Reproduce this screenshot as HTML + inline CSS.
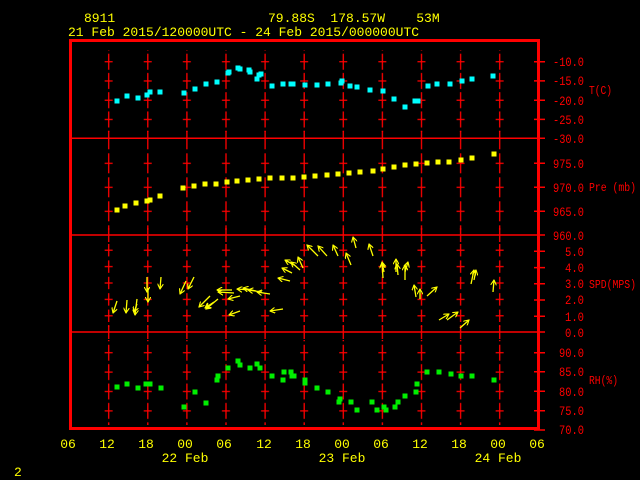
<!DOCTYPE html>
<html><head><meta charset="utf-8"><style>
html,body{margin:0;padding:0;background:#000;width:640px;height:480px;overflow:hidden}
svg{display:block}
text{font-family:"Liberation Mono",monospace}
</style></head><body>
<svg width="640" height="480" viewBox="0 0 640 480" xmlns="http://www.w3.org/2000/svg">
<defs>
<marker id="ah" viewBox="0 0 8 8" refX="7" refY="4" markerWidth="6" markerHeight="6" markerUnits="userSpaceOnUse" orient="auto">
<path d="M0,0 L7,4 L0,8" fill="none" stroke="#ffff00" stroke-width="1.5"/>
</marker>
<pattern id="pT" patternUnits="userSpaceOnUse" x="89.15" y="52.1" width="39.1" height="19.25">
<path d="M15.5 9.6H23.5M19.55 1.6V17.6" stroke="#f00" stroke-width="1.3"/></pattern>
<pattern id="pP" patternUnits="userSpaceOnUse" x="89.15" y="151.3" width="39.1" height="24">
<path d="M15.5 12H23.5M19.55 2V22" stroke="#f00" stroke-width="1.3"/></pattern>
<pattern id="pS" patternUnits="userSpaceOnUse" x="89.15" y="242" width="39.1" height="16.4">
<path d="M15.5 8.2H23.5M19.55 2V14.4" stroke="#f00" stroke-width="1.3"/></pattern>
<pattern id="pR" patternUnits="userSpaceOnUse" x="89.15" y="343" width="39.1" height="19.4">
<path d="M15.5 9.7H23.5M19.55 1.7V17.7" stroke="#f00" stroke-width="1.3"/></pattern>
<pattern id="pD" patternUnits="userSpaceOnUse" x="89.15" y="0" width="39.1" height="480">
<path d="M19.55 131V145M19.55 228V242M19.55 325V339" stroke="#f00" stroke-width="1.3"/></pattern>
</defs>
<g fill="#ffff00" font-size="13">
<text x="84" y="22">8911</text>
<text x="268" y="22" xml:space="preserve">79.88S  178.57W    53M</text>
<text x="68" y="36">21 Feb 2015/120000UTC - 24 Feb 2015/000000UTC</text>
<text x="14" y="476">2</text>
<g text-anchor="middle">
<text x="68" y="448">06</text><text x="107" y="448">12</text><text x="146" y="448">18</text><text x="185" y="448">00</text>
<text x="224" y="448">06</text><text x="264" y="448">12</text><text x="303" y="448">18</text><text x="342" y="448">00</text>
<text x="381" y="448">06</text><text x="420" y="448">12</text><text x="459" y="448">18</text><text x="498" y="448">00</text>
<text x="537" y="448">06</text>
<text x="185" y="462">22 Feb</text><text x="342" y="462">23 Feb</text><text x="498" y="462">24 Feb</text>
</g></g>
<rect x="104" y="50" width="402" height="82" fill="url(#pT)"/>
<rect x="104" y="145" width="402" height="85" fill="url(#pP)"/>
<rect x="104" y="240" width="402" height="87" fill="url(#pS)"/>
<rect x="104" y="340" width="402" height="85" fill="url(#pR)"/>
<rect x="104" y="0" width="402" height="480" fill="url(#pD)"/>
<g stroke="#f00" stroke-width="1.5">
<path d="M71 138.3H545M71 235H545M71 332H545"/>
<path d="M534 61.7H545M534 80.9H545M534 100.2H545M534 119.4H545M534 163.3H545M534 187.3H545M534 211.3H545M534 251.2H545M534 267.6H545M534 283.8H545M534 300H545M534 316.2H545M534 352.7H545M534 371.7H545M534 391.3H545M534 410.7H545M534 430H545"/>
</g>
<rect x="70.5" y="40.5" width="468" height="388" fill="none" stroke="#f00" stroke-width="3"/>
<g fill="#f00" font-size="13" text-anchor="end" lengthAdjust="spacingAndGlyphs">
<text x="584" y="66" textLength="31" lengthAdjust="spacingAndGlyphs">-10.0</text><text x="584" y="85" textLength="31" lengthAdjust="spacingAndGlyphs">-15.0</text><text x="584" y="105" textLength="31" lengthAdjust="spacingAndGlyphs">-20.0</text><text x="584" y="124" textLength="31" lengthAdjust="spacingAndGlyphs">-25.0</text><text x="584" y="143" textLength="31" lengthAdjust="spacingAndGlyphs">-30.0</text>
<text x="584" y="168" textLength="31" lengthAdjust="spacingAndGlyphs">975.0</text><text x="584" y="192" textLength="31" lengthAdjust="spacingAndGlyphs">970.0</text><text x="584" y="216" textLength="31" lengthAdjust="spacingAndGlyphs">965.0</text><text x="584" y="240" textLength="31" lengthAdjust="spacingAndGlyphs">960.0</text>
<text x="584" y="256" textLength="19" lengthAdjust="spacingAndGlyphs">5.0</text><text x="584" y="272" textLength="19" lengthAdjust="spacingAndGlyphs">4.0</text><text x="584" y="288" textLength="19" lengthAdjust="spacingAndGlyphs">3.0</text><text x="584" y="304" textLength="19" lengthAdjust="spacingAndGlyphs">2.0</text><text x="584" y="321" textLength="19" lengthAdjust="spacingAndGlyphs">1.0</text><text x="584" y="337" textLength="19" lengthAdjust="spacingAndGlyphs">0.0</text>
<text x="584" y="357" textLength="25" lengthAdjust="spacingAndGlyphs">90.0</text><text x="584" y="376" textLength="25" lengthAdjust="spacingAndGlyphs">85.0</text><text x="584" y="396" textLength="25" lengthAdjust="spacingAndGlyphs">80.0</text><text x="584" y="415" textLength="25" lengthAdjust="spacingAndGlyphs">75.0</text><text x="584" y="434" textLength="25" lengthAdjust="spacingAndGlyphs">70.0</text>
</g>
<g fill="#f00" font-size="12">
<text x="589" y="94" textLength="23" lengthAdjust="spacingAndGlyphs">T(C)</text>
<text x="589" y="191" textLength="47" lengthAdjust="spacingAndGlyphs">Pre (mb)</text>
<text x="589" y="288" textLength="47" lengthAdjust="spacingAndGlyphs">SPD(MPS)</text>
<text x="589" y="384" textLength="29" lengthAdjust="spacingAndGlyphs">RH(%)</text>
</g>
<g fill="#00ffff" transform="translate(-2.5,-2.5)">
<rect x="117" y="101" width="5" height="5"/><rect x="127" y="96" width="5" height="5"/><rect x="138" y="98" width="5" height="5"/><rect x="147" y="95" width="5" height="5"/><rect x="150" y="92" width="5" height="5"/><rect x="160" y="92" width="5" height="5"/><rect x="184" y="93" width="5" height="5"/><rect x="195" y="89" width="5" height="5"/><rect x="206" y="84" width="5" height="5"/><rect x="217" y="82" width="5" height="5"/><rect x="228" y="73" width="5" height="5"/><rect x="229" y="72" width="5" height="5"/><rect x="238" y="68" width="5" height="5"/><rect x="240" y="69" width="5" height="5"/><rect x="249" y="70" width="5" height="5"/><rect x="250" y="72" width="5" height="5"/><rect x="257" y="79" width="5" height="5"/><rect x="259" y="75" width="5" height="5"/><rect x="261" y="74" width="5" height="5"/><rect x="272" y="86" width="5" height="5"/><rect x="283" y="84" width="5" height="5"/><rect x="291" y="84" width="5" height="5"/><rect x="293" y="84" width="5" height="5"/><rect x="305" y="85" width="5" height="5"/><rect x="317" y="85" width="5" height="5"/><rect x="328" y="84" width="5" height="5"/><rect x="341" y="83" width="5" height="5"/><rect x="342" y="81" width="5" height="5"/><rect x="350" y="86" width="5" height="5"/><rect x="357" y="87" width="5" height="5"/><rect x="370" y="90" width="5" height="5"/><rect x="383" y="91" width="5" height="5"/><rect x="394" y="99" width="5" height="5"/><rect x="405" y="107" width="5" height="5"/><rect x="415" y="101" width="5" height="5"/><rect x="418" y="101" width="5" height="5"/><rect x="428" y="86" width="5" height="5"/><rect x="437" y="84" width="5" height="5"/><rect x="450" y="84" width="5" height="5"/><rect x="462" y="81" width="5" height="5"/><rect x="472" y="79" width="5" height="5"/><rect x="493" y="76" width="5" height="5"/>
</g>
<g fill="#ffff00" transform="translate(-2.5,-2.5)">
<rect x="117" y="210" width="5" height="5"/><rect x="125" y="206" width="5" height="5"/><rect x="136" y="203" width="5" height="5"/><rect x="147" y="201" width="5" height="5"/><rect x="150" y="200" width="5" height="5"/><rect x="160" y="196" width="5" height="5"/><rect x="183" y="188" width="5" height="5"/><rect x="194" y="186" width="5" height="5"/><rect x="205" y="184" width="5" height="5"/><rect x="216" y="184" width="5" height="5"/><rect x="227" y="182" width="5" height="5"/><rect x="237" y="181" width="5" height="5"/><rect x="248" y="180" width="5" height="5"/><rect x="259" y="179" width="5" height="5"/><rect x="270" y="178" width="5" height="5"/><rect x="282" y="178" width="5" height="5"/><rect x="293" y="178" width="5" height="5"/><rect x="304" y="177" width="5" height="5"/><rect x="315" y="176" width="5" height="5"/><rect x="327" y="175" width="5" height="5"/><rect x="338" y="174" width="5" height="5"/><rect x="349" y="173" width="5" height="5"/><rect x="360" y="172" width="5" height="5"/><rect x="373" y="171" width="5" height="5"/><rect x="383" y="169" width="5" height="5"/><rect x="394" y="167" width="5" height="5"/><rect x="405" y="165" width="5" height="5"/><rect x="416" y="164" width="5" height="5"/><rect x="427" y="163" width="5" height="5"/><rect x="438" y="162" width="5" height="5"/><rect x="449" y="162" width="5" height="5"/><rect x="461" y="160" width="5" height="5"/><rect x="472" y="158" width="5" height="5"/><rect x="494" y="154" width="5" height="5"/>
</g>
<g fill="#00ee00" transform="translate(-2.5,-2.5)">
<rect x="117" y="387" width="5" height="5"/><rect x="127" y="384" width="5" height="5"/><rect x="138" y="388" width="5" height="5"/><rect x="146" y="384" width="5" height="5"/><rect x="150" y="384" width="5" height="5"/><rect x="161" y="388" width="5" height="5"/><rect x="184" y="407" width="5" height="5"/><rect x="195" y="392" width="5" height="5"/><rect x="206" y="403" width="5" height="5"/><rect x="217" y="380" width="5" height="5"/><rect x="218" y="376" width="5" height="5"/><rect x="228" y="368" width="5" height="5"/><rect x="238" y="361" width="5" height="5"/><rect x="240" y="365" width="5" height="5"/><rect x="250" y="368" width="5" height="5"/><rect x="257" y="364" width="5" height="5"/><rect x="260" y="368" width="5" height="5"/><rect x="272" y="376" width="5" height="5"/><rect x="283" y="380" width="5" height="5"/><rect x="284" y="372" width="5" height="5"/><rect x="291" y="372" width="5" height="5"/><rect x="292" y="376" width="5" height="5"/><rect x="294" y="376" width="5" height="5"/><rect x="305" y="380" width="5" height="5"/><rect x="305" y="383" width="5" height="5"/><rect x="317" y="388" width="5" height="5"/><rect x="328" y="392" width="5" height="5"/><rect x="339" y="402" width="5" height="5"/><rect x="340" y="399" width="5" height="5"/><rect x="351" y="402" width="5" height="5"/><rect x="357" y="410" width="5" height="5"/><rect x="372" y="402" width="5" height="5"/><rect x="377" y="410" width="5" height="5"/><rect x="384" y="407" width="5" height="5"/><rect x="386" y="410" width="5" height="5"/><rect x="395" y="407" width="5" height="5"/><rect x="398" y="402" width="5" height="5"/><rect x="405" y="396" width="5" height="5"/><rect x="416" y="392" width="5" height="5"/><rect x="417" y="384" width="5" height="5"/><rect x="427" y="372" width="5" height="5"/><rect x="439" y="372" width="5" height="5"/><rect x="451" y="374" width="5" height="5"/><rect x="461" y="376" width="5" height="5"/><rect x="472" y="376" width="5" height="5"/><rect x="494" y="380" width="5" height="5"/>
</g>
<g stroke="#ffff00" stroke-width="1.3" fill="none" marker-end="url(#ah)">
<path d="M117 301L113 313"/><path d="M127 300L126 313"/><path d="M137 299L135 315"/><path d="M137 304L134 312"/>
<path d="M147 277L147 292"/><path d="M148 288L148 302"/><path d="M161 277L160 289"/>
<path d="M186 281L180 294"/><path d="M194 277L188 289"/>
<path d="M210 296L199 307"/><path d="M218 299L206 309"/><path d="M214 302L205 308"/>
<path d="M232 290L217 290"/><path d="M234 293L218 292"/><path d="M240 296L228 299"/><path d="M240 311L229 315"/>
<path d="M250 290L237 289"/><path d="M256 291L243 288"/><path d="M262 292L248 290"/><path d="M270 294L257 292"/>
<path d="M283 309L270 311"/><path d="M290 281L278 278"/><path d="M292 273L282 268"/><path d="M294 265L285 260"/><path d="M300 270L291 262"/>
<path d="M303 268L298 257"/><path d="M318 256L307 245"/><path d="M327 256L318 246"/><path d="M338 256L333 245"/>
<path d="M351 265L346 253"/><path d="M356 248L353 237"/><path d="M373 256L369 244"/>
<path d="M383 278L382 263"/><path d="M384 272L382 262"/><path d="M396 272L396 259"/><path d="M398 275L397 264"/><path d="M405 280L405 265"/><path d="M405 272L408 262"/>
<path d="M416 297L414 285"/><path d="M420 299L420 289"/><path d="M427 296L437 287"/>
<path d="M439 320L449 314"/><path d="M447 320L458 312"/><path d="M460 328L469 320"/>
<path d="M471 284L474 270"/><path d="M474 280L476 270"/><path d="M493 292L494 280"/>
</g>
</svg>
</body></html>
